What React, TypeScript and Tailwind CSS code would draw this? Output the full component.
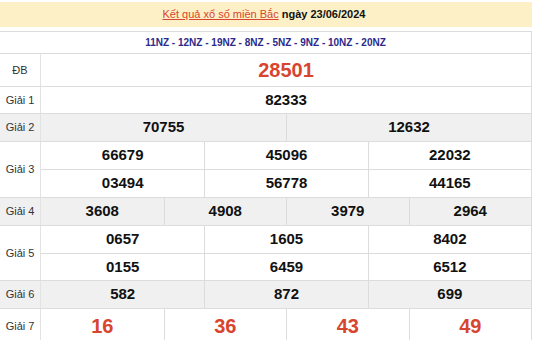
import React from "react";

const font = { fontFamily: '"Liberation Sans", Arial, sans-serif' };

function Label({ text }: { text: string }) {
  return (
    <div className="w-[41px] shrink-0 border-r border-[#e3e3e3] flex items-center justify-center text-[11px] text-[#333]">
      {text}
    </div>
  );
}

function Cells({ nums, cols, red, big }: { nums: string[]; cols: string; red?: boolean; big?: boolean }) {
  return (
    <div className={`flex-1 grid ${cols} h-full`}>
      {nums.map((n, i) => (
        <div
          key={i}
          className={`flex items-center justify-center font-bold ${i > 0 ? "border-l border-[#dcdcdc]" : ""} ${
            big ? "text-[20px]" : "text-[15px]"
          } ${red ? "text-[#d8452f]" : "text-[#111]"}`}
        >
          {n}
        </div>
      ))}
    </div>
  );
}

export default function App() {
  return (
    <div className="w-[544px] h-[340px] bg-white overflow-hidden" style={font}>
      <div className="w-[532px] pt-[2px]">
        <div className="h-[25px] bg-[#fdf0c6] flex items-center justify-center text-[11px] pr-[4px]">
          <span className="text-[#d8452f] underline">Kết quả xổ số miền Bắc</span>
          <span className="font-bold text-[#111] ml-[3px]">ngày 23/06/2024</span>
        </div>
        <div className="mt-[4px] border-r border-[#dcdcdc]">
          <div className="h-[23px] border-t border-b border-[#dcdcdc] flex items-center justify-center text-[10px] font-bold text-[#2b2a8c]">
            11NZ - 12NZ - 19NZ - 8NZ - 5NZ - 9NZ - 10NZ - 20NZ
          </div>
          <div className="h-[33px] border-b border-[#dcdcdc] flex">
            <Label text="ĐB" />
            <Cells nums={["28501"]} cols="grid-cols-1" red big />
          </div>
          <div className="h-[27px] border-b border-[#dcdcdc] flex">
            <Label text="Giải 1" />
            <Cells nums={["82333"]} cols="grid-cols-1" />
          </div>
          <div className="h-[28px] border-b border-[#dcdcdc] flex bg-[#f0f0f0]">
            <Label text="Giải 2" />
            <Cells nums={["70755", "12632"]} cols="grid-cols-2" />
          </div>
          <div className="h-[56px] border-b border-[#dcdcdc] flex">
            <Label text="Giải 3" />
            <div className="flex-1 flex flex-col">
              <div className="h-[28px] border-b border-[#dcdcdc] flex">
                <Cells nums={["66679", "45096", "22032"]} cols="grid-cols-3" />
              </div>
              <div className="h-[27px] flex">
                <Cells nums={["03494", "56778", "44165"]} cols="grid-cols-3" />
              </div>
            </div>
          </div>
          <div className="h-[28px] border-b border-[#dcdcdc] flex bg-[#f0f0f0]">
            <Label text="Giải 4" />
            <Cells nums={["3608", "4908", "3979", "2964"]} cols="grid-cols-4" />
          </div>
          <div className="h-[55px] border-b border-[#dcdcdc] flex">
            <Label text="Giải 5" />
            <div className="flex-1 flex flex-col">
              <div className="h-[28px] border-b border-[#dcdcdc] flex">
                <Cells nums={["0657", "1605", "8402"]} cols="grid-cols-3" />
              </div>
              <div className="h-[26px] flex">
                <Cells nums={["0155", "6459", "6512"]} cols="grid-cols-3" />
              </div>
            </div>
          </div>
          <div className="h-[28px] border-b border-[#dcdcdc] flex bg-[#f0f0f0]">
            <Label text="Giải 6" />
            <Cells nums={["582", "872", "699"]} cols="grid-cols-3" />
          </div>
          <div className="h-[34px] flex relative">
            <Label text="Giải 7" />
            <Cells nums={["16", "36", "43", "49"]} cols="grid-cols-4" red big />
          </div>
        </div>
      </div>
    </div>
  );
}
